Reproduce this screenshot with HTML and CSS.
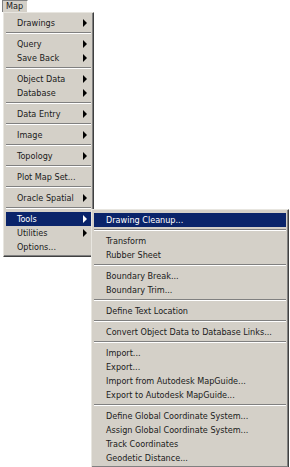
FILE: index.html
```html
<!DOCTYPE html>
<html lang="en">
<head>
  <meta charset="UTF-8">
  <link rel="stylesheet" href="styles.css">
</head>
<body>
  <div class="menubar">
    <span class="tab">Map</span>
  </div>

  <!-- main Map menu -->
  <div class="menu main">
    <div class="item sub">Drawings</div>
    <div class="sep"></div>
    <div class="item sub">Query</div>
    <div class="item sub">Save Back</div>
    <div class="sep"></div>
    <div class="item sub">Object Data</div>
    <div class="item sub">Database</div>
    <div class="sep"></div>
    <div class="item sub">Data Entry</div>
    <div class="sep"></div>
    <div class="item sub">Image</div>
    <div class="sep"></div>
    <div class="item sub">Topology</div>
    <div class="sep"></div>
    <div class="item">Plot Map Set...</div>
    <div class="sep"></div>
    <div class="item sub">Oracle Spatial</div>
    <div class="sep"></div>
    <div class="item sub active">Tools</div>
    <div class="item sub">Utilities</div>
    <div class="item">Options...</div>
  </div>

  <!-- Tools flyout -->
  <div class="menu flyout">
    <div class="item active">Drawing Cleanup...</div>
    <div class="sep"></div>
    <div class="item">Transform</div>
    <div class="item">Rubber Sheet</div>
    <div class="sep"></div>
    <div class="item">Boundary Break...</div>
    <div class="item">Boundary Trim...</div>
    <div class="sep"></div>
    <div class="item">Define Text Location</div>
    <div class="sep"></div>
    <div class="item">Convert Object Data to Database Links...</div>
    <div class="sep"></div>
    <div class="item">Import...</div>
    <div class="item">Export...</div>
    <div class="item">Import from Autodesk MapGuide...</div>
    <div class="item">Export to Autodesk MapGuide...</div>
    <div class="sep"></div>
    <div class="item">Define Global Coordinate System...</div>
    <div class="item">Assign Global Coordinate System...</div>
    <div class="item">Track Coordinates</div>
    <div class="item">Geodetic Distance...</div>
  </div>
</body>
</html>
```

FILE: styles.css
```css
body {
  margin: 0;
  background: #fff;
  font-family: "DejaVu Sans Condensed", "DejaVu Sans", sans-serif;
  font-stretch: condensed;
  font-size: 9px;
  color: #1a1a1a;
  position: relative;
  width: 290px;
  height: 467px;
  overflow: hidden;
}

.menubar {
  height: 12px;
  padding-left: 2px;
}

.tab {
  display: inline-block;
  height: 12px;
  line-height: 11px;
  padding: 0 4px 0 3px;
  background: #d4d0c8;
  border-top: 1px solid #808080;
  border-left: 1px solid #808080;
  border-right: 1px solid #fff;
  box-sizing: border-box;
}

.menu {
  background: #d4d0c8;
  border: 1px solid;
  border-color: #e8e6e0 #404040 #404040 #e8e6e0;
  box-shadow: inset -1px -1px 0 #808080;
  padding: 3px 2px 2px 2px;
  box-sizing: border-box;
}

.main {
  width: 91px;
  margin-left: 3px;
}

.flyout {
  position: absolute;
  left: 91px;
  top: 209px;
  width: 198px;
}

.item {
  height: 14px;
  line-height: 14px;
  padding-left: 11px;
  position: relative;
  white-space: nowrap;
}

.flyout .item {
  padding-left: 12px;
}

.item.sub::after {
  content: "";
  position: absolute;
  right: 4px;
  top: 3px;
  border-left: 4px solid #000;
  border-top: 4px solid transparent;
  border-bottom: 4px solid transparent;
}

.item.active {
  background: #0a246a;
  color: #fff;
}

.item.active.sub::after {
  border-left-color: #fff;
}

.sep {
  height: 0;
  margin: 2px 0 3px 0;
  border-top: 1px solid #808080;
  border-bottom: 1px solid #fff;
}
```
